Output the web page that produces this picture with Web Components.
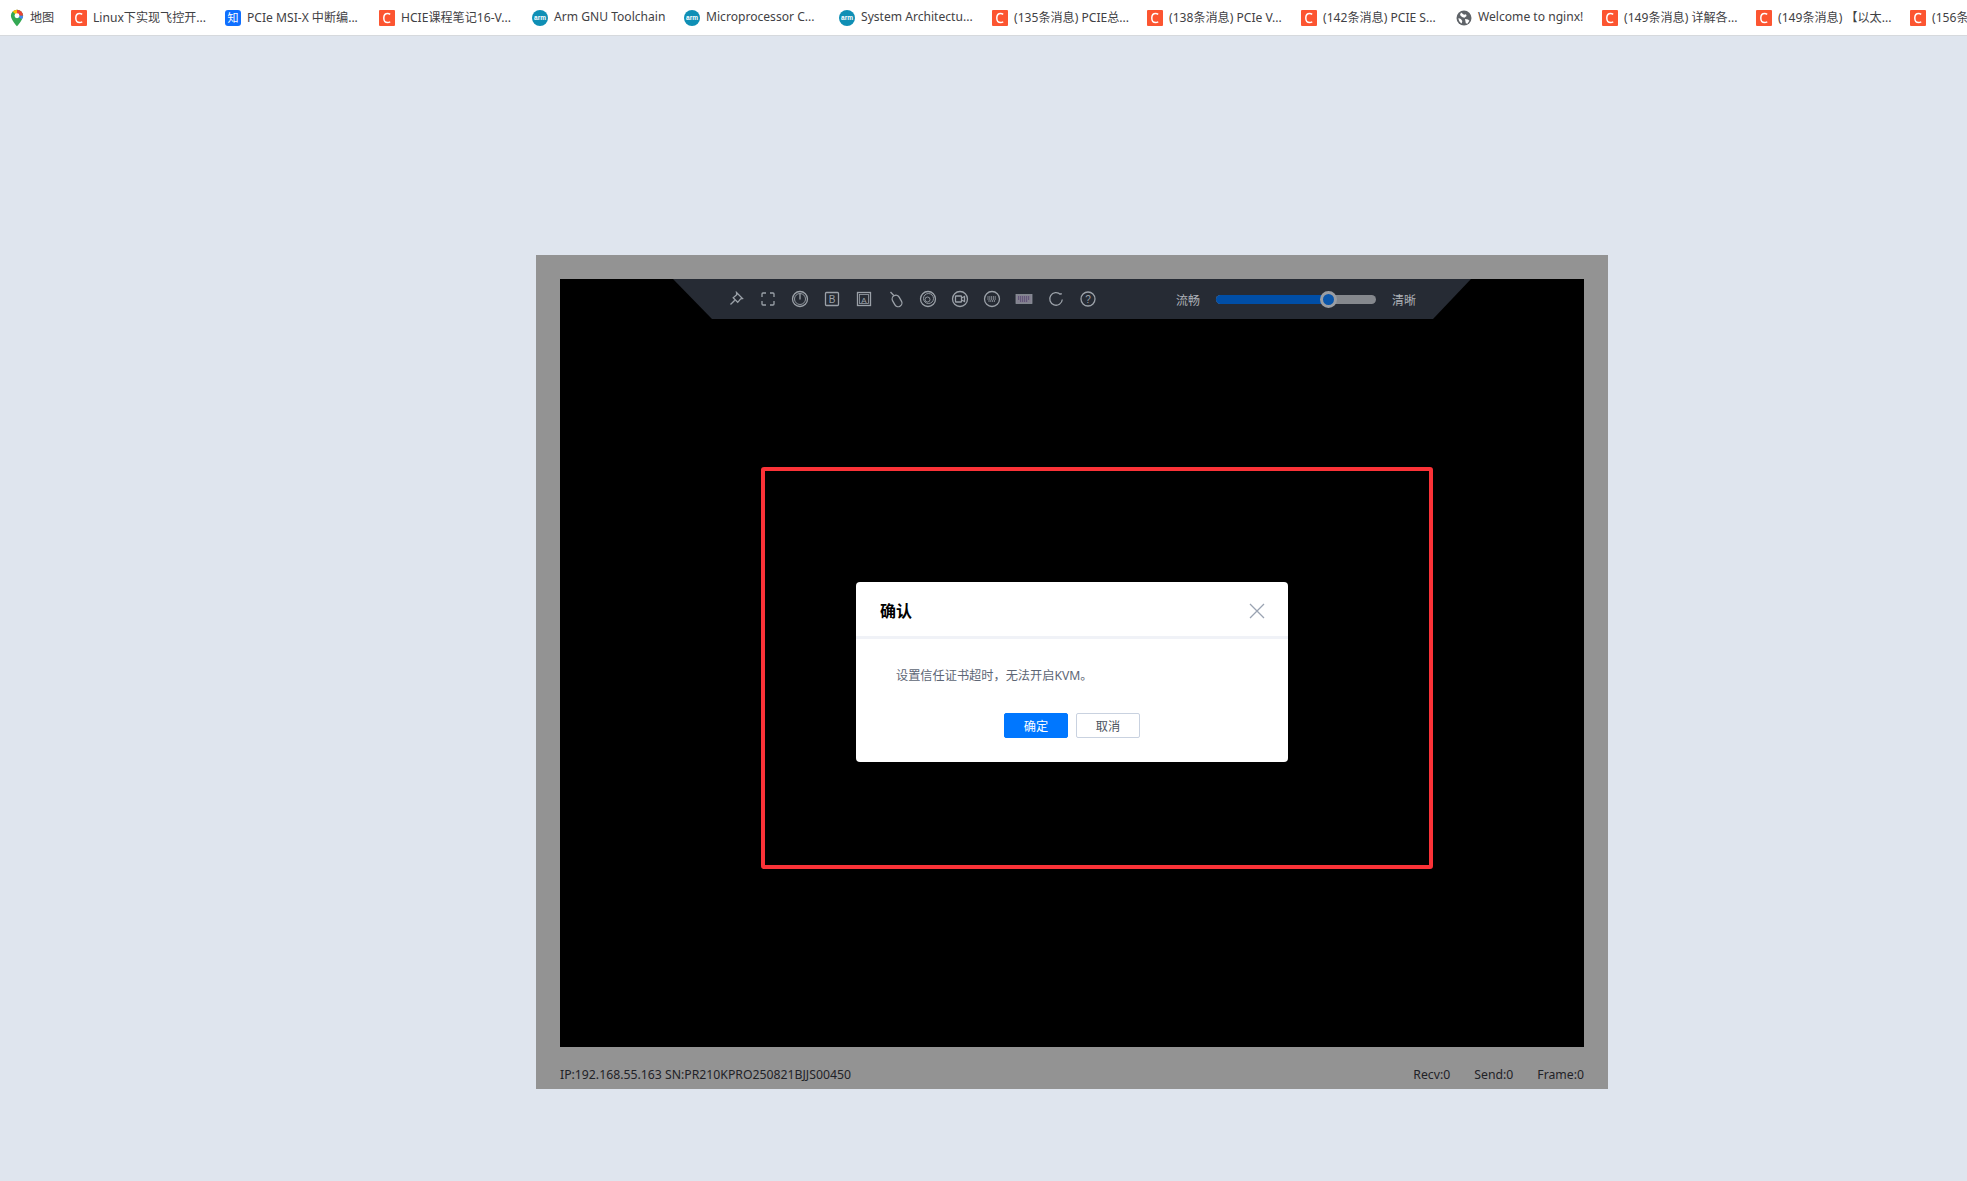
<!DOCTYPE html>
<html>
<head>
<meta charset="utf-8">
<style>
  html, body { margin: 0; padding: 0; background: #dfe5ee; }
  body { font-family: "Noto Sans", "Noto Sans CJK SC", sans-serif; height: 1181px; overflow: hidden; }
</style>
</head>
<body>
<bookmark-bar>
  <book-mark icon="map" width="61">地图</book-mark>
  <book-mark icon="c" width="154">Linux下实现飞控开...</book-mark>
  <book-mark icon="zhi" width="154">PCIe MSI-X 中断编...</book-mark>
  <book-mark icon="c" width="153">HCIE课程笔记16-V...</book-mark>
  <book-mark icon="arm" width="152">Arm GNU Toolchain</book-mark>
  <book-mark icon="arm" width="155">Microprocessor C...</book-mark>
  <book-mark icon="arm" width="153">System Architectu...</book-mark>
  <book-mark icon="c" width="155">(135条消息) PCIE总...</book-mark>
  <book-mark icon="c" width="154">(138条消息) PCIe V...</book-mark>
  <book-mark icon="c" width="155">(142条消息) PCIE S...</book-mark>
  <book-mark icon="globe" width="146">Welcome to nginx!</book-mark>
  <book-mark icon="c" width="154">(149条消息) 详解各...</book-mark>
  <book-mark icon="c" width="154">(149条消息) 【以太...</book-mark>
  <book-mark icon="c" width="154">(156条消息)</book-mark>
</bookmark-bar>
<kvm-frame>
  <kvm-toolbar></kvm-toolbar>
  <confirm-dialog heading="确认">设置信任证书超时，无法开启KVM。</confirm-dialog>
  <span slot="left">IP:192.168.55.163 SN:PR210KPRO250821BJJS00450</span>
  <span slot="right">Recv:0</span>
  <span slot="right">Send:0</span>
  <span slot="right">Frame:0</span>
</kvm-frame>

<script>
const favicons = {
  c: `<svg viewBox="0 0 16 16" width="16" height="16"><rect width="16" height="16" rx="1" fill="#fc5531"/><path d="M11.2 4.3A4.2 4.2 0 0 0 8.6 3.4C6.2 3.4 4.8 5.4 4.8 8s1.4 4.6 3.8 4.6c1 0 1.9-.3 2.6-.9" fill="none" stroke="#fff" stroke-width="1.5"/></svg>`,
  zhi: `<svg viewBox="0 0 16 16" width="16" height="16"><rect width="16" height="16" rx="3" fill="#0f6fff"/><text x="8" y="12" font-size="11" text-anchor="middle" fill="#fff" font-family="Noto Sans CJK SC">知</text></svg>`,
  arm: `<svg viewBox="0 0 16 16" width="16" height="16"><circle cx="8" cy="8" r="8" fill="#0f8fb5"/><text x="8" y="10" font-size="6.5" font-weight="700" text-anchor="middle" fill="#fff" font-family="Liberation Sans">arm</text></svg>`,
  globe: `<svg viewBox="0 0 16 16" width="16" height="16"><circle cx="8" cy="8" r="7.5" fill="#5f6368"/><path d="M5 2.5l3 2.2 2-.4.6 1.8-2.2 1.6-2.4-.6-2-2zM9 9l3 .4 1.4 1.4-2 3-1.6-.6zM2.5 8l2.4 1 1.4 2-.6 2.6A6.5 6.5 0 0 1 2.5 8z" fill="#fff"/></svg>`,
  map: `<svg viewBox="0 0 16 20" width="14" height="18"><path d="M8 0.5A7 7 0 0 0 1 7.5C1 12 8 19.5 8 19.5S15 12 15 7.5A7 7 0 0 0 8 0.5z" fill="#34a853"/><path d="M8 .5A7 7 0 0 0 3 2.6L8 7.5z" fill="#fbbc04"/><path d="M8 .5a7 7 0 0 1 7 7L8 7.5z" fill="#ea4335"/><path d="M15 7.5a7 7 0 0 1-1.500 3.800L8 7.500z" fill="#4285f4"/><circle cx="8" cy="7.500" r="2.800" fill="#fff"/></svg>`
};

class BookmarkBar extends HTMLElement {
  constructor() {
    super();
    this.attachShadow({ mode: 'open' }).innerHTML = `
      <style>
        :host { display: flex; align-items: center; height: 35px; padding-left: 10px; background: #fff; border-bottom: 1px solid #d6d9dd; overflow: hidden; white-space: nowrap; }
      </style>
      <slot></slot>`;
  }
}

class BookMark extends HTMLElement {
  constructor() {
    super();
    const w = this.getAttribute('width');
    this.attachShadow({ mode: 'open' }).innerHTML = `
      <style>
        :host { display: flex; align-items: center; gap: 6px; flex: none; width: ${w}px; height: 35px; font: 12.1px "Noto Sans", "Noto Sans CJK SC", sans-serif; color: #3f4144; }
        span { display: flex; flex: none; }
        div { margin-top: -2px; }
      </style>
      <span>${favicons[this.getAttribute('icon')]}</span><div><slot></slot></div>`;
  }
}

const toolIcons = [
  `<path d="M10.500 3.500l6 6-1.800 .3-3 3.500-4.500-4.500 3.500-3z"/><path d="M8.800 11.200L4.500 15.500"/>`,
  `<path d="M4 8V5a1 1 0 0 1 1-1h3M12 4h3a1 1 0 0 1 1 1v3M16 12v3a1 1 0 0 1-1 1h-3M8 16H5a1 1 0 0 1-1-1v-3"/>`,
  `<circle cx="10" cy="10" r="7.500"/><circle cx="10" cy="10" r="5.500" stroke-width=".9"/><path d="M10 4.500v6"/>`,
  `<rect x="3.500" y="3.500" width="13" height="13" rx="1"/><text x="10" y="14.200" font-size="10" text-anchor="middle" fill="#9ba1a8" stroke="none" font-family="Liberation Sans">B</text>`,
  `<rect x="3.500" y="3.500" width="13" height="13"/><rect x="5.500" y="5.500" width="9" height="9" stroke-width=".8"/><text x="10" y="13.500" font-size="8" text-anchor="middle" fill="#9ba1a8" stroke="none" font-family="Liberation Sans">A</text>`,
  `<path d="M4.500 3L8 6.800"/><rect x="7.300" y="6" width="7.500" height="12" rx="3.700" transform="rotate(-30 11 12)"/>`,
  `<circle cx="10" cy="10" r="7.500"/><circle cx="10.500" cy="9.500" r="5" stroke-width=".9"/><circle cx="9.500" cy="10.500" r="2.500" stroke-width=".9"/>`,
  `<circle cx="10" cy="10" r="7.500"/><rect x="5.500" y="7" width="6" height="6" rx=".6"/><path d="M11.500 9l3-1.500v5l-3-1.500"/>`,
  `<circle cx="10" cy="10" r="7.500"/><path d="M5.500 8h9M5.500 10h9M6.500 12h7" stroke-dasharray="1 .8"/>`,
  `<rect x="2" y="5.500" width="16" height="9" fill="#83818f" stroke="#8d9299" stroke-width=".8"/><path d="M4 8h12M4 10h12M6 12h8" stroke="#5b4a74" stroke-dasharray="1.200 .8"/>`,
  `<path d="M14.500 5.500A6.300 6.300 0 1 0 16.300 10.500"/><circle cx="15" cy="4.800" r=".9" fill="#9ba1a8" stroke="none"/>`,
  `<circle cx="10" cy="10" r="7"/><text x="10" y="13.500" font-size="10" text-anchor="middle" fill="#9ba1a8" stroke="none" font-family="Liberation Sans">?</text>`
];

class KvmToolbar extends HTMLElement {
  constructor() {
    super();
    const icons = toolIcons.map(p => `<svg viewBox="0 0 20 20" width="20" height="20">${p}</svg>`).join('');
    this.attachShadow({ mode: 'open' }).innerHTML = `
      <style>
        :host { position: absolute; top: 0; left: 113px; width: 751px; height: 40px; padding-left: 47px; display: flex; align-items: center; background: #262b34; clip-path: polygon(0 0, 100% 0, 760px 100%, 39px 100%); font: 12px "Noto Sans CJK SC", sans-serif; color: #aeb2b8; }
        .icons { display: flex; width: 384px; margin-right: 72px; }
        svg { flex: none; margin: 0 6px; fill: none; stroke: #9ba1a8; stroke-width: 1.300; }
        .rail { position: relative; width: 160px; height: 9px; margin: 0 16px; border-radius: 5px; background: #85888d; }
        .rail i { position: absolute; left: 0; top: 0; width: 112px; height: 9px; border-radius: 5px; background: #004ea6; }
        .rail b { position: absolute; left: 104px; top: -4px; width: 11px; height: 11px; border: 3px solid #9a9da2; border-radius: 50%; background: #0a56ab; box-sizing: content-box; }
      </style>
      <div class="icons">${icons}</div>
      <span>流畅</span>
      <div class="rail"><i></i><b></b></div>
      <span>清晰</span>`;
  }
}

class ConfirmDialog extends HTMLElement {
  constructor() {
    super();
    this.attachShadow({ mode: 'open' }).innerHTML = `
      <style>
        :host { position: absolute; left: 296px; top: 303px; width: 432px; height: 180px; display: flex; flex-direction: column; background: #fff; border-radius: 4px; font: 12.2px "Noto Sans", "Noto Sans CJK SC", sans-serif; color: #5d6675; }
        header { display: flex; align-items: center; justify-content: space-between; height: 51px; padding: 3px 23px 0 24px; border-bottom: 3px solid #f0f2f7; flex: none; }
        h2 { margin: -2px 0 0; font-size: 16px; font-weight: 700; color: #000; }
        svg { fill: none; stroke: #9aa3b2; stroke-width: 1.300; }
        .msg { padding: 27px 0 0 40px; height: 20px; line-height: 20px; }
        .btns { display: flex; justify-content: center; gap: 8px; margin-top: 27px; }
        button { width: 64px; height: 25px; padding: 0; border-radius: 2px; font: inherit; cursor: pointer; }
        .ok { background: #0077ff; border: 1px solid #0077ff; color: #fff; }
        .no { background: #fff; border: 1px solid #c9d2e0; color: #4b5360; }
      </style>
      <header>
        <h2>${this.getAttribute('heading')}</h2>
        <svg viewBox="0 0 16 16" width="16" height="16"><path d="M1 1l14 14M15 1L1 15"/></svg>
      </header>
      <div class="msg"><slot></slot></div>
      <div class="btns"><button class="ok">确定</button><button class="no">取消</button></div>`;
  }
}

class KvmFrame extends HTMLElement {
  constructor() {
    super();
    this.attachShadow({ mode: 'open' }).innerHTML = `
      <style>
        :host { display: block; box-sizing: border-box; width: 1072px; height: 834px; margin: 219px 0 0 536px; padding: 24px 24px 0; background: #939393; font: 12.25px "Noto Sans", "Noto Sans CJK SC", sans-serif; color: #1f2227; }
        .screen { position: relative; height: 768px; background: #000; }
        .mark { position: absolute; left: 201px; top: 188px; width: 664px; height: 394px; border: 4px solid #fb3237; border-radius: 3px; }
        .status { display: flex; justify-content: space-between; align-items: center; box-sizing: border-box; height: 42px; padding-top: 13px; }
        .right { display: flex; gap: 24px; }
      </style>
      <div class="screen"><slot></slot><div class="mark"></div></div>
      <div class="status"><slot name="left"></slot><div class="right"><slot name="right"></slot></div></div>`;
  }
}

customElements.define('bookmark-bar', BookmarkBar);
customElements.define('book-mark', BookMark);
customElements.define('kvm-toolbar', KvmToolbar);
customElements.define('confirm-dialog', ConfirmDialog);
customElements.define('kvm-frame', KvmFrame);
</script>
</body>
</html>
